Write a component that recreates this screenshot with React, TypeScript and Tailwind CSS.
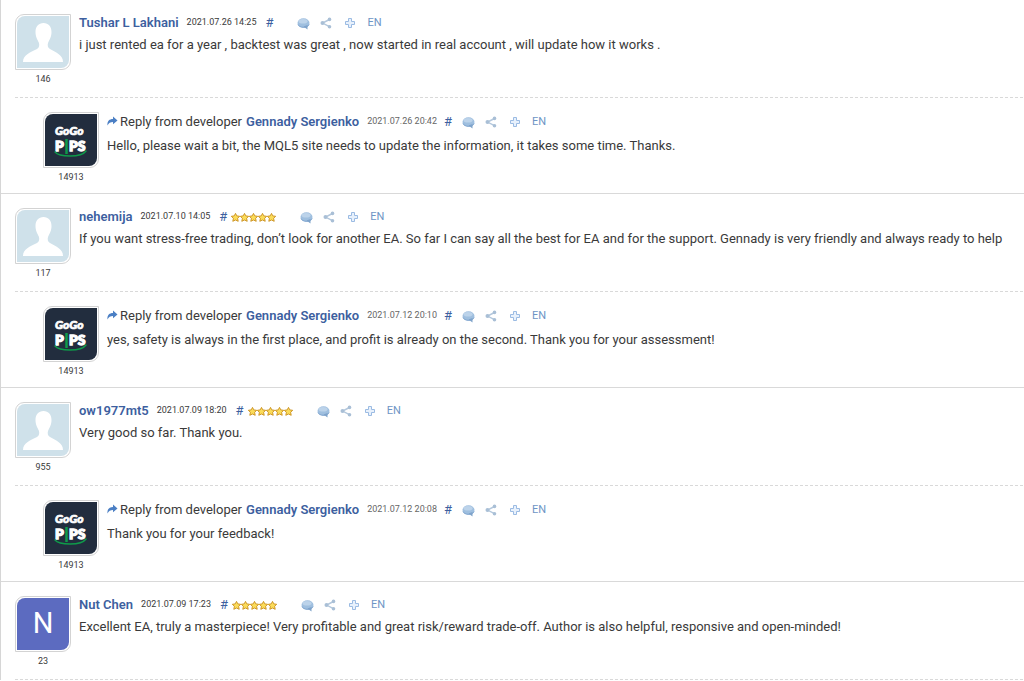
import type { ReactNode } from "react";

type Comment = {
  name: string;
  date: string;
  text: string;
  count: number;
  stars?: boolean;
  letter?: string;
  reply?: { date: string; text: string };
};

const comments: Comment[] = [
  {
    name: "Tushar L Lakhani",
    date: "2021.07.26 14:25",
    text: "i just rented ea for a year , backtest was great , now started in real account , will update how it works .",
    count: 146,
    reply: {
      date: "2021.07.26 20:42",
      text: "Hello, please wait a bit, the MQL5 site needs to update the information, it takes some time. Thanks.",
    },
  },
  {
    name: "nehemija",
    date: "2021.07.10 14:05",
    text: "If you want stress-free trading, don’t look for another EA. So far I can say all the best for EA and for the support. Gennady is very friendly and always ready to help",
    count: 117,
    stars: true,
    reply: {
      date: "2021.07.12 20:10",
      text: "yes, safety is always in the first place, and profit is already on the second. Thank you for your assessment!",
    },
  },
  {
    name: "ow1977mt5",
    date: "2021.07.09 18:20",
    text: "Very good so far. Thank you.",
    count: 955,
    stars: true,
    reply: { date: "2021.07.12 20:08", text: "Thank you for your feedback!" },
  },
  {
    name: "Nut Chen",
    date: "2021.07.09 17:23",
    text: "Excellent EA, truly a masterpiece! Very profitable and great risk/reward trade-off. Author is also helpful, responsive and open-minded!",
    count: 23,
    stars: true,
    letter: "N",
  },
];

const Person = () => (
  <svg viewBox="0 0 52 52" className="size-full bg-[#cfe1ea]" aria-hidden="true">
    <path
      d="M26.500 7c-5 0-8 3.500-8 9 0 5 2 7.500 3.300 10.500.8 2.500.6 5-1.800 6.500C13 36.500 6 39 6 46h40c0-7-7-9.500-13-13-2.500-1.500-2.700-4-1.800-6.500C32.500 23.500 34.500 21 34.500 16c0-5.500-3-9-8-9z"
      fill="#fff"
    />
  </svg>
);

const GogoPips = () => (
  <svg viewBox="0 0 52 52" className="size-full bg-[#222d3e]" aria-label="GoGo Pips">
    <g fill="#fff" fontFamily="Lato, sans-serif" fontWeight="900" stroke="#fff">
      <text x="10" y="21" fontSize="12" fontStyle="italic" strokeWidth="0.7">
        GoGo
      </text>
      <text x="10" y="37" fontSize="14" strokeWidth="1.300">
        P
      </text>
      <text x="24" y="37" fontSize="14" strokeWidth="1.300">
        PS
      </text>
    </g>
    <path d="M21.500 25v15" stroke="#0f9a4a" strokeWidth="2.500" />
    <path d="M10 38c4 5 26 6 31-1" fill="none" stroke="#0f9a4a" strokeWidth="1.500" strokeLinecap="round" />
  </svg>
);

const Bubble = () => (
  <svg viewBox="0 0 13 13" className="size-[13px]" aria-hidden="true">
    <ellipse cx="6.500" cy="6" rx="6" ry="4.700" fill="#9fbfdf" />
    <path d="M6.500 9.500l4 3L10.500 8z" fill="#7fa3c9" />
    <ellipse cx="6" cy="4.300" rx="4.500" ry="2.300" fill="#bcd3ea" />
    <path d="M1 7.500c1 3.500 9.500 4 11.200 0" fill="none" stroke="#7fa5cf" />
  </svg>
);

const Share = () => (
  <svg viewBox="0 0 12 12" className="size-3" aria-hidden="true">
    <path d="M9.500 2.500L2.500 6l7 3.700" fill="none" stroke="#b3c7dc" strokeWidth="1.400" />
    <circle cx="9.500" cy="2.400" r="1.800" fill="#a9bfd6" />
    <circle cx="2.500" cy="6" r="2" fill="#a9bfd6" />
    <circle cx="9.500" cy="9.700" r="1.800" fill="#a9bfd6" />
  </svg>
);

const Plus = () => (
  <svg viewBox="0 0 10 10" className="size-[10px]" aria-hidden="true">
    <path d="M3.500.5h3v3h3v3h-3v3h-3v-3h-3v-3h3z" fill="#e8f1fc" stroke="#9bbbe3" strokeLinejoin="round" />
  </svg>
);

const Arrow = () => (
  <svg viewBox="0 0 11 11" className="mr-0.5 mb-0.5 size-[11px]" aria-hidden="true">
    <path d="M.5 9.500C0 5 2.500 3 6 3V.5L10.500 4.500 6 8.200V6C3.500 6 1.500 7 .5 9.500z" fill="#4b7fc4" />
  </svg>
);

const Stars = () => (
  <span className="ml-1 flex" role="img" aria-label="5 stars">
    {[1, 2, 3, 4, 5].map((n) => (
      <svg key={n} viewBox="0 0 9 9" className="size-[9px]">
        <path
          d="M4.500.4l1.300 2.500 2.900.4-2.100 2 .6 3-2.700-1.300-2.700 1.300.6-3-2.100-2 2.900-.4z"
          fill="#fbdc5a"
          stroke="#c98f1c"
          strokeWidth="0.9"
          strokeLinejoin="round"
        />
      </svg>
    ))}
  </span>
);

const Avatar = ({ count, children }: { count: number; children: ReactNode }) => (
  <div className="w-14 shrink-0">
    <a
      href="#"
      className="block size-14 overflow-hidden rounded-tl-[9px] rounded-br-[9px] border border-[#d3d3d3] p-px"
    >
      <span className="block size-full overflow-hidden rounded-tl-[8px] rounded-br-[8px]">
        {children}
      </span>
    </a>
    <p className="text-center text-[9px] leading-[18px]">{count}</p>
  </div>
);

const Actions = () => (
  <>
    <button aria-label="Comment">
      <Bubble />
    </button>
    <button aria-label="Share" className="ml-[10px]">
      <Share />
    </button>
    <button aria-label="Translate" className="ml-[13px]">
      <Plus />
    </button>
    <button className="ml-3 text-[11px] text-[#6e95c5]">EN</button>
  </>
);

const Name = ({ children }: { children: ReactNode }) => (
  <a href="#" className="font-semibold text-[#3d5f9f]">
    {children}
  </a>
);

export default function App() {
  return (
    <main className="overflow-hidden border-l border-[#d6d6d6] bg-white font-[Roboto,sans-serif] text-[13px] text-[#3a3a3a]">
      {comments.map((c) => (
        <article key={c.name} className="border-b border-[#d9d9d9] last:border-b-0">
          <div className="mr-px ml-[14px] flex gap-2 border-b border-dashed border-[#d9d9d9] pt-[14px] pb-[9px]">
            <Avatar count={c.count}>
              {c.letter ? (
                <span className="flex size-full items-center justify-center bg-[#5c6bc0] text-[29px] text-white">
                  {c.letter}
                </span>
              ) : (
                <Person />
              )}
            </Avatar>
            <div className="pt-px">
              <header className="flex h-4 items-center">
                <Name>{c.name}</Name>
                <time className="ml-2 text-[9px]">{c.date}</time>
                <a href="#" className="ml-[9px] text-[#3d5f9f]">
                  #
                </a>
                {c.stars && <Stars />}
                <span className="ml-6 flex items-center">
                  <Actions />
                </span>
              </header>
              <p className="mt-1 leading-5">{c.text}</p>
            </div>
          </div>
          {c.reply && (
            <div className="ml-[42px] flex gap-2 pt-[14px] pb-[7px]">
              <Avatar count={14913}>
                <GogoPips />
              </Avatar>
              <div className="pt-0.5">
                <header className="flex h-4 items-center">
                  <Arrow />
                  <span className="mr-1">Reply from developer</span>
                  <Name>Gennady Sergienko</Name>
                  <time className="ml-2 text-[9px] text-[#666]">{c.reply.date}</time>
                  <a href="#" className="ml-[7px] text-[#3d5f9f]">
                    #
                  </a>
                  <span className="ml-[10px] flex items-center">
                    <Actions />
                  </span>
                </header>
                <p className="mt-[6px] leading-5">{c.reply.text}</p>
              </div>
            </div>
          )}
        </article>
      ))}
    </main>
  );
}
